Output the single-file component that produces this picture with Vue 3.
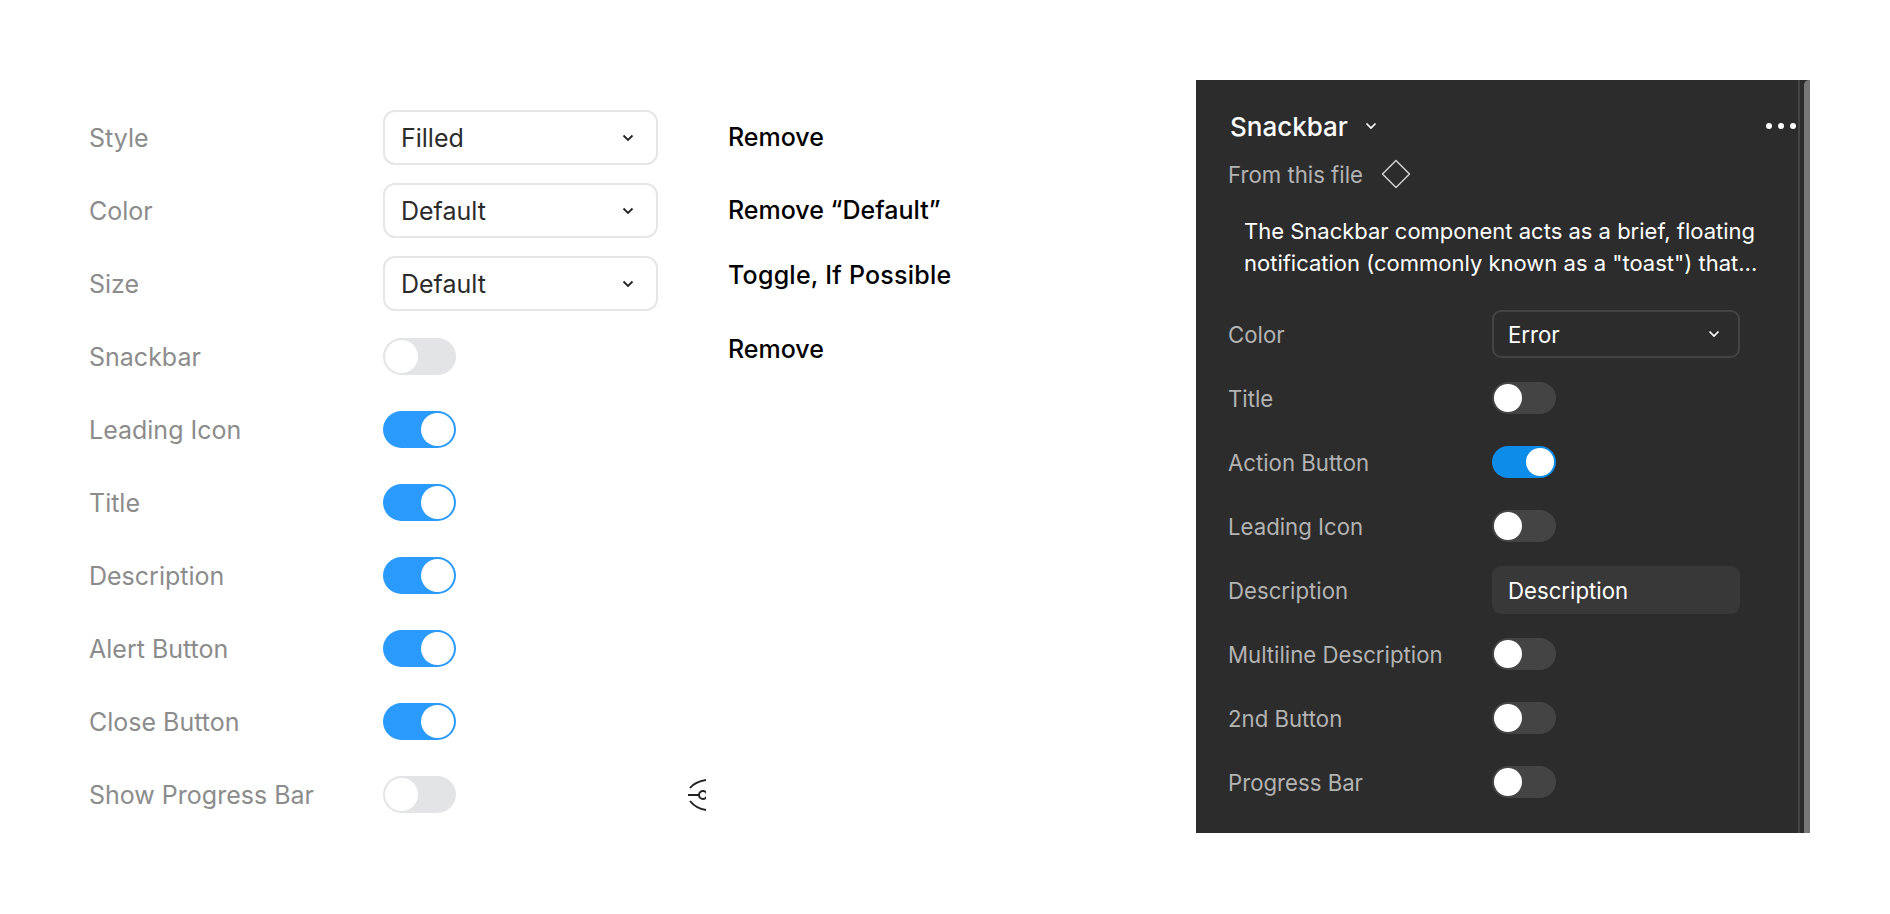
<script setup>
const selects = [
  { label: 'Style', value: 'Filled' },
  { label: 'Color', value: 'Default' },
  { label: 'Size', value: 'Default' }
]
const toggles = [
  { label: 'Snackbar', on: false },
  { label: 'Leading Icon', on: true },
  { label: 'Title', on: true },
  { label: 'Description', on: true },
  { label: 'Alert Button', on: true },
  { label: 'Close Button', on: true },
  { label: 'Show Progress Bar', on: false, icon: true }
]
const actions = [
  { text: 'Remove', cls: 'a1' },
  { text: 'Remove “Default”', cls: 'a2' },
  { text: 'Toggle, If Possible', cls: 'a3' },
  { text: 'Remove', cls: 'a4' }
]
const panelRows = [
  { label: 'Color', type: 'select', value: 'Error' },
  { label: 'Title', type: 'toggle', on: false },
  { label: 'Action Button', type: 'toggle', on: true },
  { label: 'Leading Icon', type: 'toggle', on: false },
  { label: 'Description', type: 'input', value: 'Description' },
  { label: 'Multiline Description', type: 'toggle', on: false },
  { label: '2nd Button', type: 'toggle', on: false },
  { label: 'Progress Bar', type: 'toggle', on: false }
]
</script>

<template>
  <div class="page">
    <section class="props">
      <div v-for="s in selects" :key="s.label" class="row">
        <span class="label">{{ s.label }}</span>
        <div class="select">
          <span>{{ s.value }}</span>
          <svg class="chev" width="12" height="8" viewBox="0 0 12 8"><path d="M1.500 1.500 6 6l4.500-4.500" fill="none" stroke="#222" stroke-width="1.800"/></svg>
        </div>
      </div>
      <div v-for="t in toggles" :key="t.label" class="row">
        <span class="label">{{ t.label }}</span>
        <div class="toggle" :class="{ on: t.on }"><i class="knob"></i></div>
        <svg v-if="t.icon" class="clip-icon" width="20" height="36" viewBox="0 0 20 36">
          <g fill="none" stroke="#222" stroke-width="2">
            <path d="M4 11C8 6 13 4 20 3"/>
            <path d="M4 24C8 29 13 32 20 33"/>
            <path d="M2 18H13"/>
            <circle cx="17" cy="18" r="4"/>
          </g>
        </svg>
      </div>
    </section>

    <section class="actions">
      <div v-for="a in actions" :key="a.cls" class="action" :class="a.cls">{{ a.text }}</div>
    </section>

    <aside class="panel">
      <div class="panel-main">
        <div class="panel-head">
          <span class="panel-title">Snackbar</span>
          <svg class="head-chev" width="12" height="8" viewBox="0 0 12 8"><path d="M1.500 1.500 6 6l4.500-4.500" fill="none" stroke="#fff" stroke-width="1.700"/></svg>
          <span class="dots"><i></i><i></i><i></i></span>
        </div>
        <div class="source">
          <span>From this file</span>
          <svg width="30" height="30" viewBox="0 0 30 30"><path d="M15 1.500 28.500 15 15 28.500 1.500 15Z" fill="none" stroke="#d0d0d0" stroke-width="1.500" stroke-linejoin="round"/></svg>
        </div>
        <p class="desc">The Snackbar component acts as a brief, floating<br>notification (commonly known as a "toast") that...</p>
        <div class="panel-rows">
          <div v-for="r in panelRows" :key="r.label" class="p-row">
            <span class="p-label">{{ r.label }}</span>
            <div v-if="r.type === 'select'" class="p-select">
              <span>{{ r.value }}</span>
              <svg width="12" height="8" viewBox="0 0 12 8"><path d="M1.500 1.500 6 6l4.500-4.500" fill="none" stroke="#fff" stroke-width="1.700"/></svg>
            </div>
            <div v-else-if="r.type === 'input'" class="p-input">{{ r.value }}</div>
            <div v-else class="p-toggle" :class="{ on: r.on }"><i class="p-knob"></i></div>
          </div>
        </div>
      </div>
      <div class="rail"></div>
      <div class="thumb"></div>
    </aside>
  </div>
</template>

<style>
html, body { margin: 0; background: #fff; }
</style>

<style scoped>
.page {
  width: 1890px;
  height: 914px;
  overflow: hidden;
  background: #fff;
  display: flex;
  align-items: flex-start;
  font-family: Inter, "Liberation Sans", sans-serif;
}
.props {
  width: 617px;
  margin: 101px 0 0 89px;
  flex: none;
}
.row {
  height: 73px;
  display: flex;
  align-items: center;
}
.label {
  width: 294px;
  flex: none;
  font-size: 25px;
  color: #8c8c8c;
}
.select {
  width: 275px;
  height: 55px;
  box-sizing: border-box;
  border: 2px solid #e6e6e6;
  border-radius: 12px;
  padding: 0 22px 0 16px;
  display: flex;
  align-items: center;
  justify-content: space-between;
  font-size: 25px;
  line-height: 30px;
  color: #2b2b2b;
}
.toggle {
  width: 73px;
  height: 37px;
  border-radius: 19px;
  background: #e3e4e6;
  box-sizing: border-box;
  padding: 2px;
  display: flex;
  flex: none;
}
.knob {
  width: 33px;
  height: 33px;
  border-radius: 50%;
  background: #fff;
}
.toggle.on { background: #2a9bfd; justify-content: flex-end; }
.clip-icon { margin-left: 230px; flex: none; }
.actions {
  margin: 121px 0 0 22px;
  flex: none;
  width: 468px;
}
.action {
  height: 32px;
  line-height: 32px;
  font-size: 25px;
  font-weight: 500;
  color: #000;
}
.a2 { margin-top: 41px; }
.a3 { margin-top: 33px; letter-spacing: 0.230px; }
.a4 { margin-top: 41.500px; }
.panel {
  width: 614px;
  height: 753px;
  margin-top: 80px;
  flex: none;
  background: #2c2c2c;
  display: flex;
  color: #fff;
}
.panel-main {
  flex: 1;
  min-width: 0;
  padding-left: 32px;
  padding-right: 2px;
}
.panel-head {
  height: 32px;
  margin-top: 30px;
  display: flex;
  align-items: center;
}
.panel-title {
  font-size: 26px;
  font-weight: 500;
  margin-left: 2px;
}
.head-chev { margin-left: 17px; }
.dots {
  margin-left: auto;
  display: flex;
  gap: 6px;
}
.dots i {
  width: 6px;
  height: 6px;
  border-radius: 50%;
  background: #fff;
}
.source {
  height: 32px;
  margin-top: 16px;
  display: flex;
  align-items: center;
  gap: 18px;
  font-size: 22.200px;
  color: #b3b3b3;
}
.desc {
  margin: 25px 0 0 16px;
  font-size: 22px;
  line-height: 32px;
  color: #fff;
  white-space: nowrap;
}
.panel-rows { margin-top: 23px; }
.p-row {
  height: 64px;
  display: flex;
  align-items: center;
}
.p-label {
  width: 264px;
  flex: none;
  font-size: 22.200px;
  color: #b3b3b3;
}
.p-select, .p-input {
  width: 248px;
  height: 48px;
  box-sizing: border-box;
  border-radius: 9px;
  padding: 0 16px;
  display: flex;
  align-items: center;
  font-size: 22.200px;
  color: #fff;
}
.p-select {
  border: 2px solid #444;
  justify-content: space-between;
  padding: 0 18px 0 14px;
}
.p-input { background: #383838; }
.p-toggle {
  width: 64px;
  height: 32px;
  border-radius: 16px;
  background: #444;
  box-sizing: border-box;
  padding: 2px;
  display: flex;
}
.p-knob {
  width: 28px;
  height: 28px;
  border-radius: 50%;
  background: #fff;
}
.p-toggle.on { background: #0d8ce9; justify-content: flex-end; }
.rail { width: 2px; background: #444; flex: none; }
.thumb {
  width: 6px;
  margin-left: 4px;
  flex: none;
  background: #777;
  border-top-left-radius: 5px;
}
</style>
